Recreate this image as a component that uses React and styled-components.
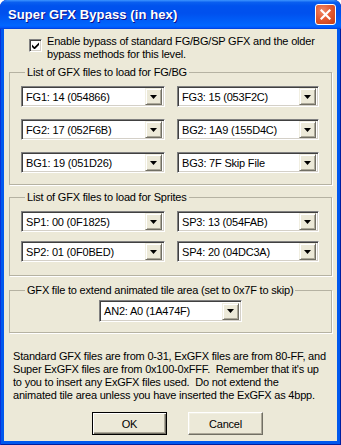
import React from 'react'
import styled, { createGlobalStyle } from 'styled-components'

const GlobalStyle = createGlobalStyle`
  html, body {
    margin: 0;
    padding: 0;
    background: #ffffff;
  }
  body {
    font-family: "Liberation Sans", "DejaVu Sans", sans-serif;
    font-size: 11px;
    letter-spacing: -0.2px;
    color: #000;
  }
`

const Window = styled.div`
  width: 341px;
  height: 445px;
  box-sizing: border-box;
  display: flex;
  flex-direction: column;
  background: #0058ee;
  border-radius: 7px 7px 0 0;
  box-shadow: inset 1px 0 0 #0831d9, inset -1px 0 0 #001ea0, inset 0 -1px 0 #001ea0;
  padding: 0 4px 4px;
  overflow: hidden;
`

const TitleBar = styled.div`
  height: 29px;
  margin: 0 -4px;
  padding: 0 5px 0 8px;
  display: flex;
  align-items: center;
  justify-content: space-between;
  border-radius: 7px 7px 0 0;
  background: linear-gradient(
    #3d95ff 0%,
    #0a5ff0 8%,
    #0053ee 20%,
    #0050ee 45%,
    #0062fb 80%,
    #0066ff 88%,
    #005bff 94%,
    #003dd7 100%
  );
`

const TitleText = styled.span`
  color: #fff;
  font-weight: bold;
  font-size: 13px;
  letter-spacing: 0.1px;
  text-shadow: 1px 1px 0 #0f1089;
`

const CloseButton = styled.div`
  width: 21px;
  height: 21px;
  box-sizing: border-box;
  border: 1px solid #fff;
  border-radius: 3px;
  background: radial-gradient(circle at 35% 30%, #f08a69 0%, #e45b33 45%, #c43c14 100%);
  display: flex;
  align-items: center;
  justify-content: center;
`

const Body = styled.div`
  flex: 1;
  background: #ece9d8;
  display: flex;
  flex-direction: column;
`

const CheckRow = styled.label`
  display: flex;
  align-items: flex-start;
  padding: 6px 0 0 25px;
  line-height: 13px;
`

const CheckBox = styled.span`
  width: 13px;
  height: 13px;
  box-sizing: border-box;
  margin-top: 4px;
  margin-right: 5px;
  flex-shrink: 0;
  background: #fff;
  border: 1px solid;
  border-color: #808080 #fff #fff #808080;
  box-shadow: inset 1px 1px 0 #404040, inset -1px -1px 0 #d4d0c8;
  display: flex;
  align-items: center;
  justify-content: center;
`

const Group = styled.fieldset`
  margin: ${p => p.$top}px 5px 0;
  padding: ${p => p.$pt}px 11px ${p => p.$pb}px 11px;
  border: 1px solid #b5b2a2;
  box-shadow: 1px 1px 0 #fff;
  min-width: 0;
`

const Legend = styled.legend`
  padding: 0 2px;
  margin-left: 4px;
  line-height: 13px;
`

const ComboGrid = styled.div`
  display: grid;
  grid-template-columns: 144px 142px;
  column-gap: 12px;
  row-gap: ${p => p.$gap}px;
`

const Combo = styled.div`
  width: ${p => p.$w || 'auto'};
  height: ${p => p.$h || 21}px;
  box-sizing: border-box;
  background: #fff;
  border: 1px solid;
  border-color: #808080 #fff #fff #808080;
  box-shadow: inset 1px 1px 0 #404040, inset -1px -1px 0 #d4d0c8;
  display: flex;
  align-items: center;
  padding: 2px;
  margin: ${p => (p.$center ? '0 auto' : '0')};
`

const ComboText = styled.span`
  flex: 1;
  padding-left: 2px;
  white-space: nowrap;
  overflow: hidden;
`

const ArrowButton = styled.span`
  width: 17px;
  height: 17px;
  box-sizing: border-box;
  background: #ece9d8;
  border: 1px solid;
  border-color: #f1efe2 #716f64 #716f64 #f1efe2;
  box-shadow: inset 1px 1px 0 #fff, inset -1px -1px 0 #aca899;
  display: flex;
  align-items: center;
  justify-content: center;
`

const Note = styled.p`
  margin: 17px 0 0 9px;
  line-height: 13px;
  white-space: nowrap;
`

const ButtonRow = styled.div`
  display: flex;
  gap: 21px;
  margin-top: 10px;
  padding-left: 88px;
`

const Button = styled.button`
  width: 75px;
  height: 23px;
  box-sizing: border-box;
  font-family: inherit;
  font-size: 11px;
  letter-spacing: inherit;
  color: #000;
  background: #ece9d8;
  border: 1px solid;
  border-color: ${p => (p.$default ? '#000' : '#fff #716f64 #716f64 #fff')};
  box-shadow: ${p =>
    p.$default
      ? 'inset 1px 1px 0 #fff, inset -1px -1px 0 #716f64, inset -2px -2px 0 #aca899'
      : 'inset -1px -1px 0 #aca899, inset 1px 1px 0 #f1efe2'};
  padding: 0;
`

const DownArrow = () => (
  <svg width="7" height="4" viewBox="0 0 7 4">
    <path d="M0 0h7L3.5 4z" fill="#000" />
  </svg>
)

const ComboBox = ({ text, w, h, center }) => (
  <Combo $w={w} $h={h} $center={center}>
    <ComboText>{text}</ComboText>
    <ArrowButton>
      <DownArrow />
    </ArrowButton>
  </Combo>
)

const fgbg = [
  'FG1: 14 (054866)',
  'FG3: 15 (053F2C)',
  'FG2: 17 (052F6B)',
  'BG2: 1A9 (155D4C)',
  'BG1: 19 (051D26)',
  'BG3: 7F Skip File',
]

const sprites = [
  'SP1: 00 (0F1825)',
  'SP3: 13 (054FAB)',
  'SP2: 01 (0F0BED)',
  'SP4: 20 (04DC3A)',
]

export default function App() {
  return (
    <>
      <GlobalStyle />
      <Window>
        <TitleBar>
          <TitleText>Super GFX Bypass (in hex)</TitleText>
          <CloseButton>
            <svg width="11" height="11" viewBox="0 0 11 11">
              <path d="M1.5 1.5l8 8M9.5 1.5l-8 8" stroke="#fff" strokeWidth="2.2" strokeLinecap="square" />
            </svg>
          </CloseButton>
        </TitleBar>
        <Body>
          <CheckRow>
            <CheckBox>
              <svg width="7" height="7" viewBox="0 0 7 7">
                <path d="M0 2.5l2.5 2.5L7 0.5v2.5L2.5 7.5 0 5z" fill="#000" />
              </svg>
            </CheckBox>
            <span>
              Enable bypass of standard FG/BG/SP GFX and the older
              <br />
              bypass methods for this level.
            </span>
          </CheckRow>

          <Group $top={5} $pt={7} $pb={11}>
            <Legend>List of GFX files to load for FG/BG</Legend>
            <ComboGrid $gap={12}>
              {fgbg.map(t => (
                <ComboBox key={t} text={t} />
              ))}
            </ComboGrid>
          </Group>

          <Group $top={6} $pt={7} $pb={13}>
            <Legend>List of GFX files to load for Sprites</Legend>
            <ComboGrid $gap={9}>
              {sprites.map(t => (
                <ComboBox key={t} text={t} />
              ))}
            </ComboGrid>
          </Group>

          <Group $top={8} $pt={3} $pb={10}>
            <Legend>GFX file to extend animated tile area (set to 0x7F to skip)</Legend>
            <ComboBox text="AN2: A0 (1A474F)" w="143px" h={22} center />
          </Group>

          <Note>
            Standard GFX files are from 0-31, ExGFX files are from 80-FF, and
            <br />
            Super ExGFX files are from 0x100-0xFFF.&nbsp; Remember that it's up
            <br />
            to you to insert any ExGFX files used.&nbsp; Do not extend the
            <br />
            animated tile area unless you have inserted the ExGFX as 4bpp.
          </Note>

          <ButtonRow>
            <Button $default>OK</Button>
            <Button>Cancel</Button>
          </ButtonRow>
        </Body>
      </Window>
    </>
  )
}
